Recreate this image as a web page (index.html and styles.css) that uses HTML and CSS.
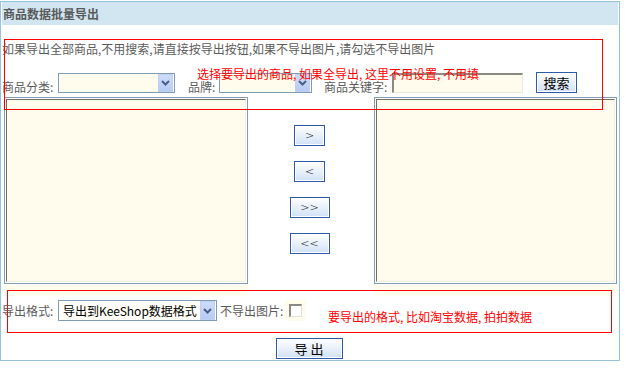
FILE: index.html
```html
<!DOCTYPE html>
<html lang="zh-CN">
<head>
<meta charset="utf-8">
<title>商品数据批量导出</title>
<link rel="stylesheet" href="styles.css">
</head>
<body>
<div class="panel">
  <div class="panel-head">商品数据批量导出</div>
  <div class="panel-body">
    <div class="hint">如果导出全部商品,不用搜索,请直接按导出按钮,如果不导出图片,请勾选不导出图片</div>
    <div class="search-row">
      <span class="lbl lbl-cat">商品分类:</span>
      <div class="select sel-cat"><span class="select-value"></span><span class="select-arrow"><svg width="13" height="16" viewBox="0 0 13 16"><polyline points="3,6 6.5,9.5 10,6" fill="none" stroke="#4a5f86" stroke-width="2"/></svg></span></div>
      <span class="lbl lbl-brand">品牌:</span>
      <div class="select sel-brand"><span class="select-value"></span><span class="select-arrow"><svg width="13" height="16" viewBox="0 0 13 16"><polyline points="3,6 6.5,9.5 10,6" fill="none" stroke="#4a5f86" stroke-width="2"/></svg></span></div>
      <span class="lbl lbl-key">商品关键字:</span>
      <input class="keyword" type="text">
      <button class="btn btn-search" type="button">搜索</button>
    </div>
    <div class="lists">
      <div class="listbox-wrap">
        <div class="listbox"><div class="listbox-inner"></div></div>
        <div class="strip"></div>
      </div>
      <div class="movers">
        <button class="btn btn-move" type="button">&gt;</button>
        <button class="btn btn-move" type="button">&lt;</button>
        <button class="btn btn-move btn-wide" type="button">&gt;&gt;</button>
        <button class="btn btn-move btn-wide" type="button">&lt;&lt;</button>
      </div>
      <div class="listbox-wrap right">
        <div class="listbox"><div class="listbox-inner"></div></div>
        <div class="strip"></div>
      </div>
    </div>
    <div class="fmt-row">
      <span class="lbl lbl-fmt">导出格式:</span>
      <div class="select sel-fmt"><span class="select-value">导出到KeeShop数据格式</span><span class="select-arrow"><svg width="13" height="16" viewBox="0 0 13 16"><polyline points="3,6 6.5,9.5 10,6" fill="none" stroke="#4a5f86" stroke-width="2"/></svg></span></div>
      <span class="lbl lbl-noimg">不导出图片:</span>
      <span class="check-cell"><span class="checkbox"></span></span>
      <span class="note note-fmt">要导出的格式, 比如淘宝数据, 拍拍数据</span>
    </div>
    <div class="submit-row">
      <button class="btn btn-export" type="button">导 出</button>
    </div>
  </div>
  <div class="mark mark-top"></div>
  <div class="mark mark-bottom"></div>
  <div class="note note-top">选择要导出的商品, 如果全导出, 这里不用设置, 不用填</div>
</div>
</body>
</html>
```
FILE: styles.css
```css
* { box-sizing: border-box; }
html, body { margin: 0; padding: 0; background: #fff; }
body {
  font-family: "Noto Sans CJK SC", "Liberation Sans", sans-serif;
  font-size: 12px;
  color: #5c5c5c;
}
.panel {
  position: relative;
  width: 620px;
  margin-top: 1px;
  border: 1px solid #95c3dc;
  padding: 0 1px 1px 1px;
}
.panel-head {
  height: 23px;
  background: #d1e6f1;
  padding-left: 1px;
  font-weight: bold;
  line-height: 23px;
  color: #5a5a5a;
  font-size: 12px;
}
.panel-body { display: flex; flex-direction: column; }
.hint {
  margin-top: 15px;
  height: 18px;
  line-height: 18px;
}
.search-row {
  margin-top: 14px;
  height: 21px;
  display: flex;
  align-items: center;
}
.lbl { line-height: 14px; white-space: nowrap; }
.search-row .lbl { align-self: flex-end; margin-bottom: -1px; }
.lbl-cat { width: 56px; }
.lbl-brand { margin-left: 13px; width: 31px; }
.lbl-key { margin-left: 12px; width: 68px; }
.select {
  display: flex;
  height: 20px;
  border: 1px solid #7f9db9;
  background: #fffcee;
  padding-right: 1px;
}
.select-value {
  flex: 1;
  line-height: 18px;
  padding-left: 4px;
  color: #000;
  white-space: nowrap;
  overflow: hidden;
}
.select-arrow {
  width: 15px;
  display: flex;
  align-items: center;
  justify-content: center;
  background: linear-gradient(#cddcf9, #b6cbf4);
  border: 1px solid #bfd0f2;
}
.sel-cat { width: 117px; }
.sel-brand { width: 93px; }
.keyword {
  margin: 0;
  width: 131px;
  height: 20px;
  border-style: solid;
  border-width: 2px 1px 1px 2px;
  border-color: #8a8a80 #ece9d8 #ece9d8 #8a8a80;
  background: #fffcee;
  padding: 0;
}
.btn {
  margin: 0;
  padding: 0;
  height: 21px;
  border: 1px solid #2e5ba8;
  box-shadow: inset 0 0 0 1px #fff;
  background: linear-gradient(#ffffff, #d2e1f6);
  font-family: "Noto Sans CJK SC", "Liberation Sans", sans-serif;
  font-size: 12px;
  color: #000;
  line-height: 17px;
}
.btn-search { margin-left: 13px; width: 41px; font-size: 13px; }
.lists {
  margin-top: 4px;
  display: flex;
}
.listbox-wrap {
  margin-left: 2px;
  width: 244px;
  display: flex;
  flex-direction: column;
}
.listbox-wrap.right { margin-left: 0; width: 243px; }
.listbox {
  height: 187px;
  border: 1px solid #7f9db9;
  padding: 1px;
  background: #fff;
}
.listbox-inner {
  height: 100%;
  background: #fffcee;
  border-style: solid;
  border-width: 1px;
  border-color: #716f64 #f1efe2 #f1efe2 #716f64;
}
.strip {
  margin-top: 1px;
  height: 11px;
  background: #fffcee;
}
.movers {
  width: 126px;
  padding-top: 28px;
  padding-right: 3px;
  display: flex;
  flex-direction: column;
  align-items: center;
  gap: 15px;
}
.btn-move { width: 31px; font-family: "DejaVu Sans", sans-serif; font-size: 11px; font-weight: 300; }
.btn-wide { width: 40px; }
.fmt-row {
  margin-top: 4px;
  height: 21px;
  display: flex;
  align-items: center;
}
.lbl-fmt { width: 56px; line-height: 21px; }
.sel-fmt { width: 159px; height: 21px; background: #fffef8; }
.sel-fmt .select-value { line-height: 19px; padding-left: 4px; font-size: 12px; }
.lbl-noimg { margin-left: 3px; width: 65px; line-height: 21px; }
.check-cell {
  width: 21px;
  height: 21px;
  background: #fffcee;
  display: flex;
  align-items: center;
  justify-content: center;
}
.checkbox {
  width: 13px;
  height: 13px;
  background: #fff;
  border-style: solid;
  border-width: 2px 1px 1px 2px;
  border-color: #8a8a82 #e2e0d8 #e2e0d8 #8a8a82;
}
.note { color: #ff0000; white-space: nowrap; line-height: 14px; }
.note-fmt { margin-left: 22px; align-self: flex-start; padding-top: 10px; }
.submit-row {
  margin-top: 17px;
  display: flex;
  justify-content: center;
}
.btn-export { width: 67px; margin-right: 2px; font-size: 13px; }
.mark {
  position: absolute;
  border: 1px solid #ff0000;
  pointer-events: none;
}
.mark-top { left: 3px; top: 37px; width: 599px; height: 71px; }
.mark-bottom { left: 6px; top: 288px; width: 605px; height: 43px; }
.note-top { position: absolute; left: 196px; top: 65px; }
```
